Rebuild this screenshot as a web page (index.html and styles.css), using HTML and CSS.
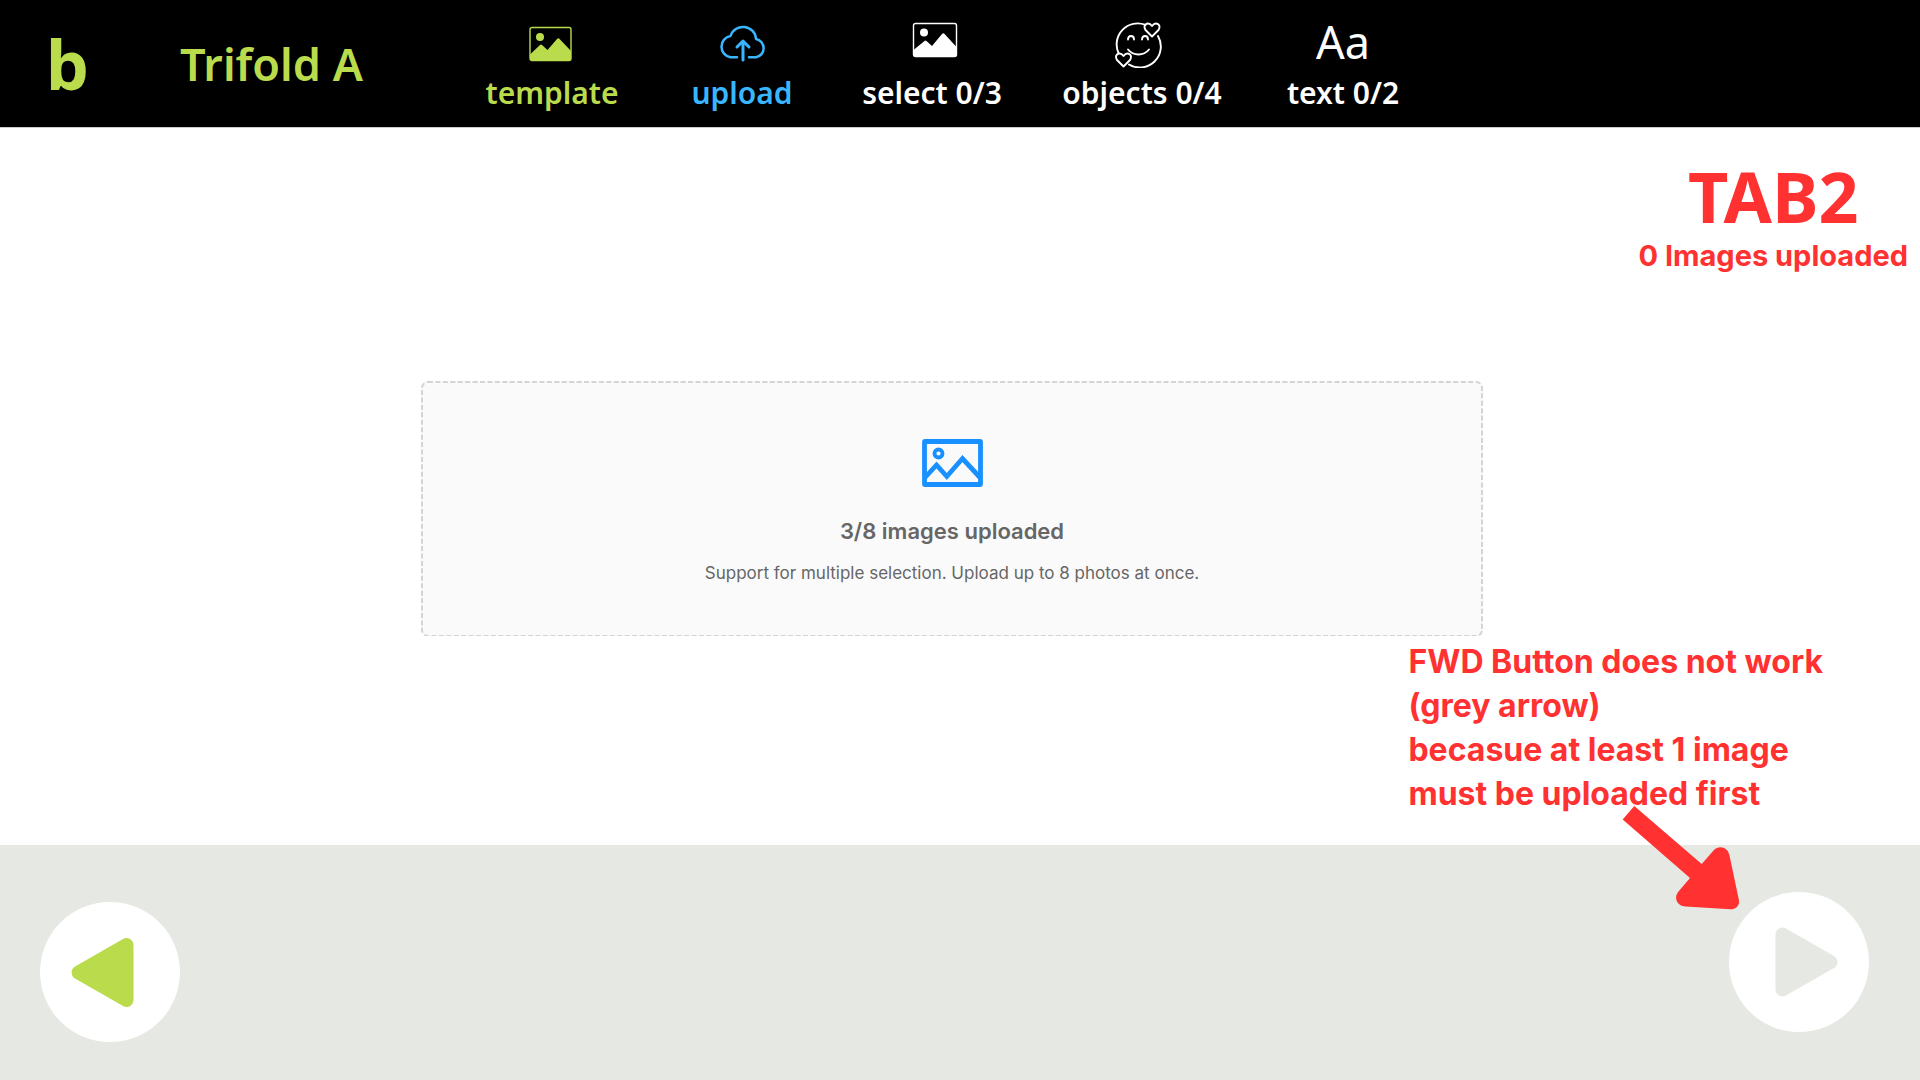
FILE: index.html
```html
<!DOCTYPE html>
<html lang="en">
<head>
  <meta charset="utf-8">
  <meta name="viewport" content="width=device-width, initial-scale=1">
  <title>Trifold A – upload</title>
  <link rel="stylesheet" href="styles.css">
</head>
<body>
  <header class="topbar">
    <a class="logo" href="#">b</a>
    <h1 class="product">Trifold A</h1>
    <nav class="steps">
      <a class="step step-done" href="#template">
        <svg class="step-icon" width="46" height="36" viewBox="0 0 46 36" aria-hidden="true">
          <rect x="1" y="1.5" width="41" height="33" rx="2" fill="none" stroke="currentColor" stroke-width="1.4"/>
          <circle cx="11" cy="11" r="4" fill="currentColor"/>
          <path d="M1 28.500 11 19q1-.8 2 0l5.500 5L28 13q1.300-1.300 2.600 0L42 25v7.500q0 2-2 2h-37q-2 0-2-2z" fill="currentColor"/>
        </svg>
        <span>template</span>
      </a>
      <a class="step step-current" href="#upload" aria-current="step">
        <svg class="step-icon" width="50" height="40" viewBox="0 0 50 40" fill="none" stroke="currentColor" stroke-width="2.500" stroke-linecap="round" stroke-linejoin="round" aria-hidden="true">
          <path d="M20 35.300H13.500A10.800 10.800 0 0 1 13.500 14A13 12.500 0 0 1 39 17A9.300 9.300 0 0 1 39 35.300H32"/>
          <path d="M26 38V20M20 25l6-6 6 6" stroke-width="3"/>
        </svg>
        <span>upload</span>
      </a>
      <a class="step" href="#select">
        <svg class="step-icon" width="52" height="36" viewBox="-6 0 52 36" aria-hidden="true">
          <rect x="1.500" y="1.500" width="43" height="33" rx="2" fill="none" stroke="currentColor" stroke-width="1.400"/>
          <circle cx="12" cy="10.500" r="4" fill="currentColor"/>
          <path d="M1.500 28 12.500 19q1-.8 2 0l5.500 5L30 12q1.300-1.300 2.600 0L44.500 25v8q0 2-2 2h-39q-2 0-2-2z" fill="currentColor"/>
        </svg>
        <span>select 0/3</span>
      </a>
      <a class="step" href="#objects">
        <svg class="step-icon" width="54" height="46" viewBox="0 0 54 46" fill="none" stroke="currentColor" stroke-width="1.900" stroke-linecap="round" stroke-linejoin="round" aria-hidden="true">
          <path d="M30.500 2.900A21 21 0 0 0 3.500 31M14 42.500A21 21 0 0 0 43 14"/>
          <path d="M13 17.500q0-3.500 3-3.500t3 3.500M27 17.500q0-3.500 3-3.500t3 3.500M13 27.500q4 5 10.500 5T34 27.500"/>
          <path d="M37 14.500 30.500 8Q28.500 4.500 30.500 2.500 34 0 37 4 40 0 43.500 2.500 45.500 4.500 43.500 8ZM8.500 44.500 2 38Q0 34.500 2 32.500 5.500 30 8.500 34 11.500 30 15 32.500 17 34.500 15 38Z"/>
        </svg>
        <span>objects 0/4</span>
      </a>
      <a class="step" href="#text">
        <span class="step-glyph" aria-hidden="true">Aa</span>
        <span>text 0/2</span>
      </a>
    </nav>
  </header>

  <main class="stage">
    <div class="tab-note">
      <h2 class="tab-title">TAB2</h2>
      <p class="tab-status">0 Images uploaded</p>
    </div>

    <label class="dropzone">
      <input class="file-input" type="file" accept="image/*" multiple>
      <svg class="dropzone-edge" aria-hidden="true">
        <rect class="dropzone-dashes" x="1" y="1" rx="6"/>
      </svg>
      <svg width="61" height="48" viewBox="0 0 61 48" fill="none" stroke="#1890ff" aria-hidden="true">
        <rect x="2.500" y="2.500" width="56" height="43" rx="0.500" stroke-width="4.800" stroke-linejoin="round"/>
        <circle cx="16.500" cy="14.500" r="4" stroke-width="3.800"/>
        <path d="M3 38.500 14.500 26 24.800 37.500 40.500 19.500 58 38.500" stroke-width="4.800"/>
      </svg>
      <strong class="dropzone-title">3/8 images uploaded</strong>
      <span class="dropzone-hint">Support for multiple selection. Upload up to 8 photos at once.</span>
    </label>

    <p class="forward-note">FWD Button does not work<br>(grey arrow)<br>becasue at least 1 image<br>must be uploaded first</p>
  </main>

  <footer class="pager">
    <button class="pager-button pager-back" type="button" aria-label="Back">
      <svg width="140" height="140" viewBox="0 0 140 140" aria-hidden="true">
        <path d="M86.500 43 38.500 70.500 86.500 98Z" fill="#badb4c" stroke="#badb4c" stroke-width="14" stroke-linejoin="round"/>
      </svg>
    </button>
    <div class="forward">
      <svg class="pointer" width="120" height="108" viewBox="0 0 120 108" aria-hidden="true">
        <path d="M12.300 1 79.700 59 91.500 45.500C97 39.500 106 42 107.500 50.500L117 95.500C117.500 100.500 114 104.500 108.500 104.300L63.500 101.600C54.500 101 51.500 92 56.500 86.500L68 73 .700 14.500Z" fill="#ff3131"/>
      </svg>
      <button class="pager-button" type="button" aria-label="Forward" disabled>
        <svg width="140" height="140" viewBox="0 0 140 140" aria-hidden="true">
          <path d="M53.500 42.500 101.500 70 53.500 97.500Z" fill="#e6e8e3" stroke="#e6e8e3" stroke-width="14" stroke-linejoin="round"/>
        </svg>
      </button>
    </div>
  </footer>
</body>
</html>
```
FILE: styles.css
```css
* {
  box-sizing: border-box;
}

body {
  margin: 0;
  min-height: 100vh;
  display: flex;
  flex-direction: column;
  background: #fff;
  font-family: Inter, "Liberation Sans", sans-serif;
}

h1,
h2,
p {
  margin: 0;
}

/* Top bar */

.topbar {
  display: flex;
  align-items: center;
  height: 128px;
  padding-left: 46px;
  background: #000;
  border-bottom: 1px solid #cfc9c9;
  font-family: "Noto Sans", sans-serif;
  font-weight: 600;
}

.logo {
  width: 134px;
  color: #badb4c;
  font-size: 68px;
  font-weight: 700;
  line-height: 120px;
  text-decoration: none;
}

.product {
  width: 277px;
  color: #badb4c;
  font-size: 45px;
  font-weight: 600;
  line-height: 60px;
  white-space: nowrap;
}

.steps {
  align-self: flex-start;
  display: grid;
  grid-template-columns: 190px 190px 190px 230px 172px;
  padding-top: 22px;
}

.step {
  display: grid;
  grid-template-rows: 46px 50px;
  justify-items: center;
  align-items: start;
  color: #fff;
  font-size: 30px;
  line-height: 50px;
  text-decoration: none;
  white-space: nowrap;
}

.step-done {
  color: #badb4c;
}

.step-done .step-icon {
  margin-top: 4px;
}

.step-current {
  color: #38b6ff;
}

.step-glyph {
  font-size: 45px;
  font-weight: 400;
  line-height: 40px;
}

/* Stage */

.stage {
  flex: 1;
  display: flex;
  flex-direction: column;
  color: #ff3131;
}

.tab-note {
  align-self: flex-end;
  padding: 28px 12px 0 0;
  text-align: center;
}

.tab-title {
  font-family: "Noto Sans", sans-serif;
  font-size: 70px;
  font-weight: 700;
  line-height: 80px;
}

.tab-status {
  font-size: 29px;
  font-weight: 700;
  line-height: 40px;
}

.dropzone {
  position: relative;
  display: flex;
  flex-direction: column;
  align-items: center;
  width: 1062px;
  max-width: 100%;
  margin: 105px auto 0;
  padding: 58px 0 49px;
  right: 8px;
  background: #fafafa;
  border-radius: 6px;
  color: #666;
  cursor: pointer;
}

.dropzone-edge {
  position: absolute;
  inset: 0;
  width: 100%;
  height: 100%;
}

.dropzone-dashes {
  width: calc(100% - 2px);
  height: calc(100% - 1px);
  fill: none;
  stroke: #d4d4d4;
  stroke-width: 2px;
  stroke-dasharray: 5 2.43;
}

.file-input {
  position: absolute;
  inset: 0;
  opacity: 0;
}

.dropzone-title {
  margin-top: 28px;
  font-size: 22px;
  font-weight: 600;
  line-height: 32px;
}

.dropzone-hint {
  margin-top: 12px;
  font-size: 17px;
  line-height: 28px;
}

.forward-note {
  align-self: flex-end;
  margin: 4px 97px 0 0;
  font-size: 32px;
  font-weight: 700;
  line-height: 44px;
}

/* Pager */

.pager {
  display: flex;
  justify-content: space-between;
  align-items: flex-start;
  height: 235px;
  padding: 47px 51px 0 40px;
  background: #e6e8e3;
}

.pager-button {
  display: block;
  width: 140px;
  height: 140px;
  padding: 0;
  border: 0;
  border-radius: 50%;
  background: #fff;
}

.pager-back {
  margin-top: 10px;
}

.forward {
  position: relative;
}

.pointer {
  position: absolute;
  right: 127px;
  bottom: 119px;
}
```
